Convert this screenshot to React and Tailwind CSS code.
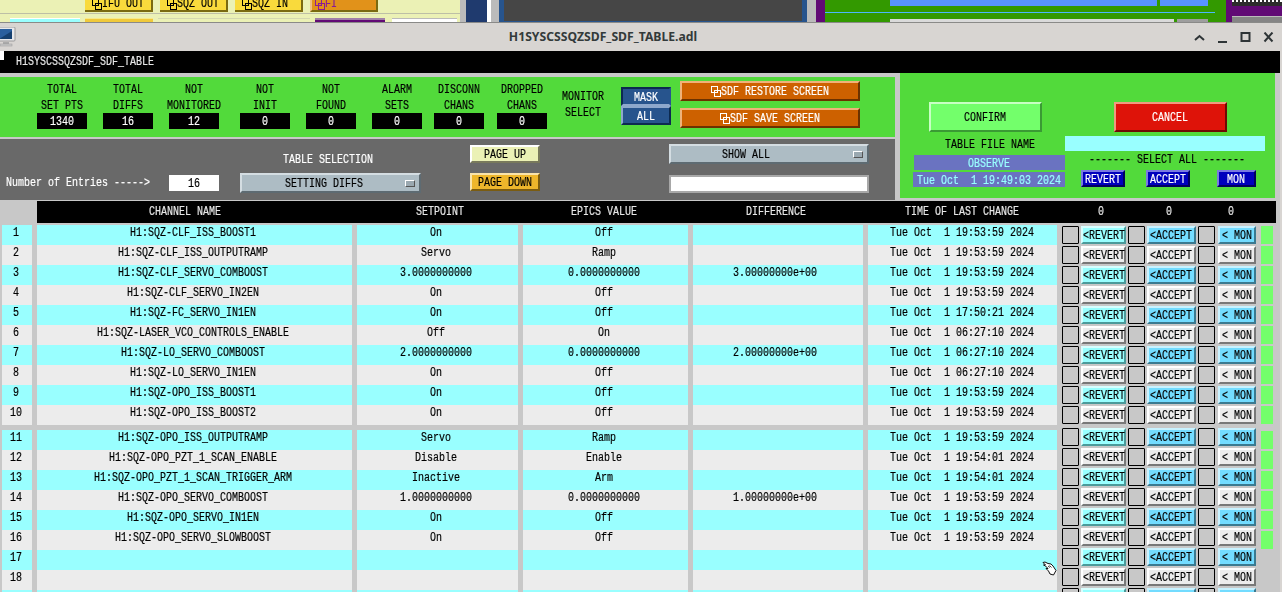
import React from "react";

const T = ({ children, className = "" }) => (
  <span className={"inline-block scale-y-[1.35] translate-y-px whitespace-pre leading-[14px] [-webkit-text-stroke-width:0.15px] [will-change:transform] " + className}>{children}</span>
);

const RD = ({ color = "currentColor" }) => (
  <svg width="10" height="11" viewBox="0 0 10 11" className="inline-block align-[-1px]" fill="none" stroke={color} strokeWidth="1" shapeRendering="crispEdges">
    <rect x="0.5" y="0.5" width="6" height="6" />
    <rect x="3.5" y="4.5" width="6" height="6" />
  </svg>
);

const stats = [
  ["TOTAL", "SET PTS", "1340", "ml-[37px]"],
  ["TOTAL", "DIFFS", "16", "ml-[16px]"],
  ["NOT", "MONITORED", "12", "ml-[16px]"],
  ["NOT", "INIT", "0", "ml-[21px]"],
  ["NOT", "FOUND", "0", "ml-[16px]"],
  ["ALARM", "SETS", "0", "ml-[16px]"],
  ["DISCONN", "CHANS", "0", "ml-[12px]"],
  ["DROPPED", "CHANS", "0", "ml-[13px]"],
];

const rows = [
  ["H1:SQZ-CLF_ISS_BOOST1", "On", "Off", "", "Tue Oct  1 19:53:59 2024"],
  ["H1:SQZ-CLF_ISS_OUTPUTRAMP", "Servo", "Ramp", "", "Tue Oct  1 19:53:59 2024"],
  ["H1:SQZ-CLF_SERVO_COMBOOST", "3.0000000000", "0.0000000000", "3.00000000e+00", "Tue Oct  1 19:53:59 2024"],
  ["H1:SQZ-CLF_SERVO_IN2EN", "On", "Off", "", "Tue Oct  1 19:53:59 2024"],
  ["H1:SQZ-FC_SERVO_IN1EN", "On", "Off", "", "Tue Oct  1 17:50:21 2024"],
  ["H1:SQZ-LASER_VCO_CONTROLS_ENABLE", "Off", "On", "", "Tue Oct  1 06:27:10 2024"],
  ["H1:SQZ-LO_SERVO_COMBOOST", "2.0000000000", "0.0000000000", "2.00000000e+00", "Tue Oct  1 06:27:10 2024"],
  ["H1:SQZ-LO_SERVO_IN1EN", "On", "Off", "", "Tue Oct  1 06:27:10 2024"],
  ["H1:SQZ-OPO_ISS_BOOST1", "On", "Off", "", "Tue Oct  1 19:53:59 2024"],
  ["H1:SQZ-OPO_ISS_BOOST2", "On", "Off", "", "Tue Oct  1 19:53:59 2024"],
  ["H1:SQZ-OPO_ISS_OUTPUTRAMP", "Servo", "Ramp", "", "Tue Oct  1 19:53:59 2024"],
  ["H1:SQZ-OPO_PZT_1_SCAN_ENABLE", "Disable", "Enable", "", "Tue Oct  1 19:54:01 2024"],
  ["H1:SQZ-OPO_PZT_1_SCAN_TRIGGER_ARM", "Inactive", "Arm", "", "Tue Oct  1 19:54:01 2024"],
  ["H1:SQZ-OPO_SERVO_COMBOOST", "1.0000000000", "0.0000000000", "1.00000000e+00", "Tue Oct  1 19:53:59 2024"],
  ["H1:SQZ-OPO_SERVO_IN1EN", "On", "Off", "", "Tue Oct  1 19:53:59 2024"],
  ["H1:SQZ-OPO_SERVO_SLOWBOOST", "On", "Off", "", "Tue Oct  1 19:53:59 2024"],
  ["", "", "", "", ""],
  ["", "", "", "", ""],
  ["", "", "", "", ""],
];

const Cell = ({ w, bg, children, extra = "" }) => (
  <div className={`${w} ${bg} ${extra} h-5 flex justify-center items-start text-black`}>
    <T>{children}</T>
  </div>
);

const Row = ({ i, r }) => {
  const bg = i % 2 === 0 ? "bg-[#99ffff]" : "bg-[#ececec]";
  return (
    <div className="flex h-5 gap-[5px] ml-[2px]">
      <Cell w="w-[30px]" bg={bg} extra="pr-[2px]">{i + 1}</Cell>
      <Cell w="w-[315px]" bg={bg} extra="pr-[2px]">{r[0]}</Cell>
      <Cell w="w-[161px]" bg={bg} extra="pr-[2px]">{r[1]}</Cell>
      <Cell w="w-[165px]" bg={bg} extra="pr-[3px]">{r[2]}</Cell>
      <Cell w="w-[170px]" bg={bg} extra="pr-[6px]">{r[3]}</Cell>
      <Cell w="w-[189px]" bg={bg}>{r[4]}</Cell>
    </div>
  );
};

const Check = () => (
  <div className="w-[17px] h-[18px] bg-[#c8c8c8] border border-black rounded-[1px]" />
);

const Btn = ({ w, children, cls }) => (
  <div className={`${w} ${cls} h-[18px] border-2 flex items-center justify-center text-black`}>
    <T>{children}</T>
  </div>
);

const BtnRow = ({ i }) => {
  const odd = i % 2 === 0;
  const grey = "bg-[#ececec] border-t-white border-l-white border-b-[#787878] border-r-[#787878]";
  const rev = odd ? "bg-[#99ffff] border-t-[#d8ffff] border-l-[#d8ffff] border-b-[#4a9a9a] border-r-[#4a9a9a]" : grey;
  const acc = odd ? "bg-[#73dcff] border-t-[#c8f2ff] border-l-[#c8f2ff] border-b-[#3a7a90] border-r-[#3a7a90]" : grey;
  return (
    <div className="flex h-[18px] mb-[2px]">
      <Check />
      <div className="ml-[2px]"><Btn w="w-[45px]" cls={rev}>{"<REVERT"}</Btn></div>
      <div className="ml-[2px]"><Check /></div>
      <div className="ml-[2px]"><Btn w="w-[49px]" cls={acc}>{"<ACCEPT"}</Btn></div>
      <div className="ml-[2px]"><Check /></div>
      <div className="ml-[3px]"><Btn w="w-[38px]" cls={acc}>{"< MON"}</Btn></div>
    </div>
  );
};

const Green = () => <div className="w-3 h-[18px] mb-[2px] bg-[#73ff6b]" />;

const TopBtn = ({ children, orange }) => (
  <div className={`w-[68px] h-[12px] overflow-hidden border-r-2 border-b-2 border-r-[#7a6a10] border-b-[#7a6a10] flex items-end ${orange ? "bg-[#e1921a] text-[#8b1a96] border-l-2 border-l-[#f0c080] pl-[3px]" : "bg-[#f9da3c] text-black pl-[7px]"}`}>
    <RD /><T>{children}</T>
  </div>
);

function TopStrip() {
  return (
    <div className="flex h-[22px] overflow-hidden">
      <div className="w-[460px] bg-[#ebf1b5]">
        <div className="flex gap-[7px] pl-[85px] h-[12px]">
          <TopBtn>IFU OUT</TopBtn>
          <TopBtn>SQZ OUT</TopBtn>
          <TopBtn>SQZ IN</TopBtn>
          <TopBtn orange>FI</TopBtn>
        </div>
        <div className="h-px mt-[1px] bg-[#bdbfa6]" />
        <div className="flex gap-[5px] mt-[4px] pl-[10px] h-[5px]">
          <div className="w-[70px] bg-[#99ffff] border-t border-white" />
          <div className="w-[68px] bg-[#f0c93a] border-t border-[#f7e98a]" />
          <div className="w-[152px] border-t border-[#d4d8b0]" />
          <div className="w-[70px] bg-[#610a75] border-t-2 border-[#a080a8]" />
          <div className="w-[65px] bg-white border-t border-[#bbb] ml-[2px]" />
        </div>
      </div>
      <div className="w-[6px] bg-[#bbbbbb]" />
      <div className="w-[21px] bg-[#1f3a6e]" />
      <div className="w-[4px] bg-white" />
      <div className="w-[8px] bg-[#bbbbbb]" />
      <div className="w-[308px] bg-[#27548d] px-[5px]">
        <div className="h-[21px] bg-[#464646]" />
      </div>
      <div className="w-[9px] bg-[#bbbbbb]" />
      <div className="w-[9px] bg-[#610a75]" />
      <div className="w-[401px] bg-[#339900]">
        <div className="flex gap-[3px] pl-[65px] h-[6px]">
          <div className="w-[267px] bg-[#5893ff]" />
          <div className="w-[48px] bg-[#5893ff]" />
        </div>
        <div className="w-[390px] h-px mt-[6px] bg-[#4bb7ff]" />
        <div className="flex gap-[3px] pl-[65px] mt-[6px] h-[3px]">
          <div className="w-[284px] bg-[#dadada]" />
          <div className="w-[31px] bg-[#9e9e9e]" />
        </div>
      </div>
      <div className="w-[56px] bg-[#610a75] pl-[6px]">
        <div className="h-[6px] bg-[#2d2d2d] border-t-2 border-dotted border-white" />
        <div className="h-[6px] mt-[10px] bg-[#858585] border-t border-[#bbb]" />
      </div>
    </div>
  );
}

function TitleBar() {
  return (
    <div className="relative h-[29px] bg-[#d8d5d2] border-t border-[#8a8a88] flex items-center justify-center">
      <svg width="16" height="20" viewBox="0 0 16 20" className="absolute left-0 top-[4px]">
        <rect x="-2" y="0" width="17" height="14" rx="1" fill="#e8e8ea" stroke="#9a9a9a" />
        <rect x="-1" y="2" width="13" height="10" fill="#2a5f9e" />
        <path d="M-1 12 L12 4 V12Z" fill="#16406f" />
        <rect x="3" y="15" width="6" height="2" fill="#aaa" />
        <rect x="0" y="17" width="12" height="2" fill="#c8c8c8" stroke="#999" strokeWidth="0.5" />
      </svg>
      <span className="font-['Noto_Sans'] font-bold text-[12.2px] text-[#333a3a] mr-[76px] leading-none">H1SYSCSSQZSDF_SDF_TABLE.adl</span>
      <div className="absolute right-[8px] top-[9px] flex items-start gap-[12px]">
        <svg width="11" height="11" viewBox="0 0 11 11" fill="none" stroke="#2e3436" strokeWidth="2"><path d="M1 8 L5.5 4 L10 8" /></svg>
        <svg width="11" height="11" viewBox="0 0 11 11" fill="none" stroke="#2e3436" strokeWidth="2"><path d="M1 10 H10" /></svg>
        <svg width="11" height="11" viewBox="0 0 11 11" fill="none" stroke="#2e3436" strokeWidth="2"><rect x="1.5" y="1" width="8" height="8" /></svg>
        <svg width="11" height="11" viewBox="0 0 11 11" fill="none" stroke="#2e3436" strokeWidth="2"><path d="M1.5 0.5 L9.5 9.5 M9.5 0.5 L1.5 9.5" /></svg>
      </div>
    </div>
  );
}

const Bevel = ({ w, h, cls, children }) => (
  <div className={`${w} ${h} ${cls} border-2 flex items-center justify-center`}>{children}</div>
);

function GreenPanel() {
  return (
    <div className="h-[60px] w-[895px] bg-[#52da3b] flex text-black">
      {stats.map((s) => (
        <div key={s[0] + s[1]} className={`${s[3]} w-[50px] flex flex-col items-center pt-[4px]`}>
          <div className="h-4 flex items-center"><T>{s[0]}</T></div>
          <div className="h-4 flex items-center"><T>{s[1]}</T></div>
          <div className="w-[50px] h-4 bg-black text-white flex items-center justify-center"><T>{s[2]}</T></div>
        </div>
      ))}
      <div className="ml-[11px] w-[50px] flex flex-col items-center pt-[11px]">
        <div className="h-4 flex items-center"><T>MONITOR</T></div>
        <div className="h-4 flex items-center"><T>SELECT</T></div>
      </div>
      <div className="w-[50px] pt-[10px] ml-[13px] flex flex-col">
        <Bevel w="w-[50px]" h="h-[19px]" cls="bg-[#27548d] text-white border-t-[#0c2a50] border-l-[#0c2a50] border-b-[#8ea8cc] border-r-[#27548d]"><T>MASK</T></Bevel>
        <Bevel w="w-[50px]" h="h-[19px]" cls="bg-[#27548d] text-white border-t-[#8ea8cc] border-l-[#8ea8cc] border-b-[#0c2a50] border-r-[#0c2a50]"><T>ALL</T></Bevel>
      </div>
      <div className="ml-[9px] pt-[4px] flex flex-col gap-[7px]">
        <Bevel w="w-[180px]" h="h-5" cls="bg-[#cd6100] text-white border-t-[#efb27a] border-l-[#efb27a] border-b-[#6b3200] border-r-[#6b3200]"><RD /><T>SDF RESTORE SCREEN</T></Bevel>
        <Bevel w="w-[180px]" h="h-5" cls="bg-[#cd6100] text-white border-t-[#efb27a] border-l-[#efb27a] border-b-[#6b3200] border-r-[#6b3200]"><RD /><T>SDF SAVE SCREEN</T></Bevel>
      </div>
    </div>
  );
}

const MenuKnob = () => (
  <div className="absolute right-[4px] top-[5px] w-[10px] h-[7px] bg-[#9aa8b0] border border-t-white border-l-white border-b-[#555] border-r-[#555]" />
);

function GreyPanel() {
  return (
    <div className="mt-[2px] h-[61px] w-[895px] bg-[#696969] flex text-white">
      <div className="ml-[6px] w-[150px] pt-[36px]"><T>{"Number of Entries ----->"}</T></div>
      <div className="ml-[13px] pt-[36px]">
        <div className="w-[50px] h-4 bg-white text-black flex items-center justify-center"><T>16</T></div>
      </div>
      <div className="ml-[21px] w-[181px] pt-[13px] flex flex-col items-center">
        <div className="h-[14px] pr-[4px] flex items-center"><T>TABLE SELECTION</T></div>
        <div className="relative mt-[7px] w-[181px] h-5 bg-[#adbcc4] text-black border-2 border-t-[#d4dde2] border-l-[#d4dde2] border-b-[#5e6b72] border-r-[#5e6b72] flex items-center justify-center pr-[12px]">
          <T>SETTING DIFFS</T><MenuKnob />
        </div>
      </div>
      <div className="ml-[49px] pt-[6px] flex flex-col gap-[10px]">
        <Bevel w="w-[70px]" h="h-[18px]" cls="bg-[#ebf1b5] text-black border-t-white border-l-white border-b-[#78795c] border-r-[#78795c]"><T>PAGE UP</T></Bevel>
        <Bevel w="w-[70px]" h="h-[18px]" cls="bg-[#eeb62b] text-black border-t-[#f9e3aa] border-l-[#f9e3aa] border-b-[#7a5c12] border-r-[#7a5c12]"><T>PAGE DOWN</T></Bevel>
      </div>
      <div className="ml-[129px] pt-[5px] flex flex-col gap-[11px]">
        <div className="relative w-[200px] h-5 bg-[#adbcc4] text-black border-2 border-t-[#d4dde2] border-l-[#d4dde2] border-b-[#5e6b72] border-r-[#5e6b72] flex items-center justify-center pr-[46px]">
          <T>SHOW ALL</T><MenuKnob />
        </div>
        <div className="w-[200px] h-[18px] bg-white border-2 border-[#a8a8a8]" />
      </div>
    </div>
  );
}

function RightPanel() {
  const blue = "bg-[#0000bd] text-white border-t-[#7a7ae0] border-l-[#7a7ae0] border-b-[#000060] border-r-[#000060]";
  return (
    <div className="ml-[5px] w-[375px] h-[125px] bg-[#52da3b] flex text-black pt-[29px] pl-[14px]">
      <div className="w-[151px]">
        <div className="ml-[15px]">
          <Bevel w="w-[113px]" h="h-[30px]" cls="bg-[#73ff6b] border-t-[#c8ffc4] border-l-[#c8ffc4] border-b-[#3a9a34] border-r-[#3a9a34]"><T>CONFIRM</T></Bevel>
        </div>
        <div className="h-[14px] mt-[5px] ml-[2px] flex items-center justify-center"><T>TABLE FILE NAME</T></div>
        <div className="h-[15px] mt-[4px] bg-[#6a73c1] text-[#99ffff] flex items-center justify-center"><T>OBSERVE</T></div>
        <div className="h-[15px] mt-[2px] ml-[-1px] bg-[#6a73c1] text-[#99ffff] flex items-center justify-center"><T>Tue Oct  1 19:49:03 2024</T></div>
      </div>
      <div className="w-[200px]">
        <div className="ml-[49px]">
          <Bevel w="w-[113px]" h="h-[30px]" cls="bg-[#de1309] text-white border-t-[#f09a80] border-l-[#f09a80] border-b-[#6e0a04] border-r-[#6e0a04]"><T>CANCEL</T></Bevel>
        </div>
        <div className="h-[15px] mt-[4px] bg-[#99ffff]" />
        <div className="h-[14px] mt-[1px] flex items-center justify-center pl-[4px]"><T>------- SELECT ALL -------</T></div>
        <div className="flex mt-[4px] ml-[16px]">
          <Bevel w="w-[44px]" h="h-[17px]" cls={blue}><T>REVERT</T></Bevel>
          <div className="ml-[21px]"><Bevel w="w-[44px]" h="h-[17px]" cls={blue}><T>ACCEPT</T></Bevel></div>
          <div className="ml-[27px]"><Bevel w="w-[39px]" h="h-[17px]" cls={blue}><T>MON</T></Bevel></div>
        </div>
      </div>
    </div>
  );
}

const HeadCol = ({ w, children, extra = "" }) => (
  <div className={`${w} ${extra} flex justify-center`}><T>{children}</T></div>
);

function Header() {
  return (
    <div className="ml-[37px] w-[1239px] h-[22px] bg-black text-[#e6e6e6] flex items-start pt-[3px]">
      <HeadCol w="w-[320px]" extra="pr-[24px]">CHANNEL NAME</HeadCol>
      <HeadCol w="w-[166px]">SETPOINT</HeadCol>
      <HeadCol w="w-[170px]" extra="pr-[8px]">EPICS VALUE</HeadCol>
      <HeadCol w="w-[175px]" extra="pr-[8px]">DIFFERENCE</HeadCol>
      <HeadCol w="w-[194px]" extra="pr-[6px]">TIME OF LAST CHANGE</HeadCol>
      <HeadCol w="w-[20px]" extra="ml-[29px]">0</HeadCol>
      <HeadCol w="w-[20px]" extra="ml-[48px]">0</HeadCol>
      <HeadCol w="w-[20px]" extra="ml-[42px]">0</HeadCol>
    </div>
  );
}

const Hand = () => (
  <svg width="15" height="15" viewBox="0 0 15 15" className="absolute left-[1042px] top-[561px]">
    <path d="M1 1.5 L3 1 L6 2.5 L9 3 L11 5 L14 9.5 L11.5 14 L8 13 L6.5 10 L4 7.5 L6 7.5 L3.5 5 L1.5 4 L3.5 4 Z" fill="#fff" stroke="#111" strokeWidth="1" strokeLinejoin="round" />
    <path d="M6 5 L8 6.5 M7.5 4.5 L9.5 6.5" stroke="#111" strokeWidth="0.8" fill="none" />
  </svg>
);

export default function App() {
  return (
    <div className="relative w-[1282px] h-[592px] overflow-hidden bg-[#d8d5d2] font-['Liberation_Mono',monospace] text-[10px] leading-[14px]">
      <TopStrip />
      <TitleBar />
      <div className="relative h-[22px] w-[1280px] bg-black text-[#e6e6e6] pl-4 pt-[3px]">
        <div className="absolute left-0 top-0 w-1 h-[9px] bg-white" />
        <T>H1SYSCSSQZSDF_SDF_TABLE</T>
      </div>
      <div className="w-[1280px] h-[519px] bg-[#c8c8c8]">
        <div className="flex h-[128px]">
          <div className="pt-[4px]">
            <GreenPanel />
            <GreyPanel />
          </div>
          <RightPanel />
        </div>
        <Header />
        <div className="flex">
          <div className="mt-[2px] w-[1062px]">
            {rows.slice(0, 10).map((r, i) => <Row key={i} i={i} r={r} />)}
            <div className="h-[5px]" />
            {rows.slice(10).map((r, i) => <Row key={i + 10} i={i + 10} r={r} />)}
          </div>
          <div className="mt-[3px] w-[199px]">
            {rows.slice(0, 10).map((r, i) => <BtnRow key={i} i={i} />)}
            <div className="h-[2px]" />
            {rows.slice(10).map((r, i) => <BtnRow key={i + 10} i={i + 10} />)}
          </div>
          <div className="mt-[3px]">
            {rows.slice(0, 10).map((r, i) => <Green key={i} />)}
            <div className="h-[5px]" />
            {rows.slice(10, 16).map((r, i) => <Green key={i} />)}
          </div>
        </div>
      </div>
      <Hand />
    </div>
  );
}
